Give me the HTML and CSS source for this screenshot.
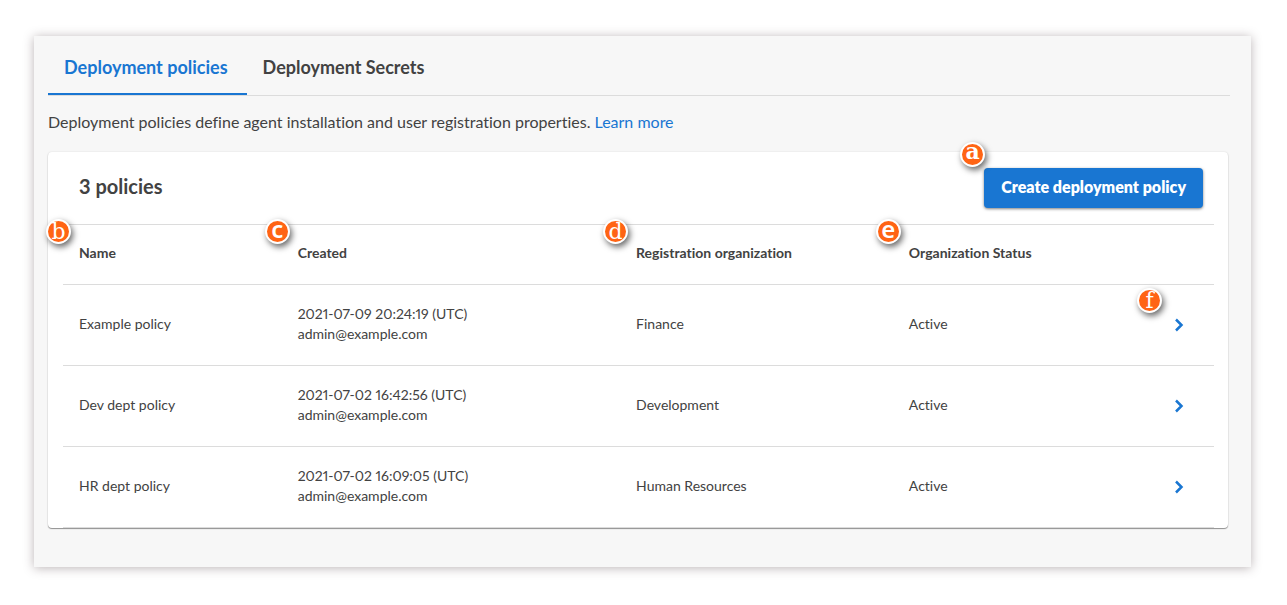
FILE: index.html
```html
<!DOCTYPE html>
<html lang="en">

<head>
    <meta charset="UTF-8">
    <meta name="viewport" content="width=device-width, initial-scale=1.0">
    <title>Deployment policies</title>
    <link rel="stylesheet" href="styles.css">
</head>

<body>
    <main class="panel">
        <nav class="tabs">
            <a href="#" class="tab active">Deployment policies</a>
            <a href="#" class="tab">Deployment Secrets</a>
        </nav>

        <p class="intro">Deployment policies define agent installation and user registration properties. <a href="#">Learn more</a></p>

        <section class="card">
            <div class="card-header">
                <h2>3 policies</h2>
                <div class="create">
                    <button type="button" class="create-btn">Create deployment policy</button>
                    <span class="badge badge-create">a</span>
                </div>
            </div>

            <div class="table-wrap">
                <table>
                    <colgroup>
                        <col class="col-name">
                        <col class="col-created">
                        <col class="col-org">
                        <col class="col-status">
                        <col>
                    </colgroup>
                    <thead>
                        <tr>
                            <th>Name<span class="badge">b</span></th>
                            <th>Created<span class="badge badge-sans">c</span></th>
                            <th>Registration organization<span class="badge">d</span></th>
                            <th>Organization Status<span class="badge badge-sans">e</span></th>
                            <th></th>
                        </tr>
                    </thead>
                    <tbody>
                        <tr>
                            <td>Example policy</td>
                            <td>2021-07-09 20:24:19 (UTC)<br>admin@example.com</td>
                            <td>Finance</td>
                            <td>Active</td>
                            <td class="open">
                                <a href="#" class="open-link" aria-label="Open Example policy">
                                    <svg viewBox="0 0 24 24"><path d="M9 7.5l5.5 5.5L9 18.5" /></svg>
                                    <span class="badge badge-open">f</span>
                                </a>
                            </td>
                        </tr>
                        <tr>
                            <td>Dev dept policy</td>
                            <td>2021-07-02 16:42:56 (UTC)<br>admin@example.com</td>
                            <td>Development</td>
                            <td>Active</td>
                            <td class="open">
                                <a href="#" class="open-link" aria-label="Open Dev dept policy">
                                    <svg viewBox="0 0 24 24"><path d="M9 7.5l5.5 5.5L9 18.5" /></svg>
                                </a>
                            </td>
                        </tr>
                        <tr>
                            <td>HR dept policy</td>
                            <td>2021-07-02 16:09:05 (UTC)<br>admin@example.com</td>
                            <td>Human Resources</td>
                            <td>Active</td>
                            <td class="open">
                                <a href="#" class="open-link" aria-label="Open HR dept policy">
                                    <svg viewBox="0 0 24 24"><path d="M9 7.5l5.5 5.5L9 18.5" /></svg>
                                </a>
                            </td>
                        </tr>
                    </tbody>
                </table>
            </div>
        </section>
    </main>
</body>

</html>
```
FILE: styles.css
```css
* {
    margin: 0;
    padding: 0;
    box-sizing: border-box;
}

body {
    background: #fff;
    color: #424242;
    font-family: Lato, "Liberation Sans", sans-serif;
    font-size: 14px;
    font-variant-ligatures: none;
    font-variant-numeric: proportional-nums;
    line-height: 20px;
    padding: 36px 36px 38px 34px;
}

a {
    color: #1976d2;
    text-decoration: none;
}

.panel {
    background: #f7f7f7;
    padding: 0 21px 39px 14px;
    box-shadow: 0 1px 10px rgba(60, 40, 45, 0.35);
}

.tabs {
    display: flex;
    border-bottom: 1px solid #dcdcdc;
}

.tab {
    padding: 21px 19px 16px 16px;
    border-bottom: 2px solid transparent;
    color: #424242;
    font-size: 18px;
    font-weight: 700;
}

.tab.active {
    color: #1976d2;
    border-bottom-color: #1976d2;
}

.intro {
    padding: 16px 0 20px;
    font-size: 16px;
}

.card {
    margin-right: 2px;
    background: #fff;
    border-radius: 4px;
    box-shadow: 0 1px 1px rgba(0, 0, 0, 0.4), 0 0 2px rgba(0, 0, 0, 0.12);
}

.card-header {
    display: flex;
    justify-content: space-between;
    align-items: flex-start;
    height: 72px;
    padding: 16px 25px 0 31px;
}

h2 {
    font-size: 20px;
    font-weight: 700;
    line-height: 36px;
}

.create {
    position: relative;
}

.create-btn {
    display: block;
    height: 40px;
    padding: 0 17px 2px;
    border: none;
    border-radius: 4px;
    background: #1976d2;
    color: #fff;
    font: inherit;
    font-size: 16px;
    font-weight: 800;
    box-shadow: 0 1px 3px rgba(0, 0, 0, 0.5);
    cursor: pointer;
}

.table-wrap {
    padding: 0 14px 0 15px;
}

table {
    width: 100%;
    table-layout: fixed;
    border-spacing: 0;
    border-top: 1px solid #dcdcdc;
}

.col-name {
    width: 19%;
}

.col-created {
    width: 29.4%;
}

.col-org {
    width: 23.7%;
}

.col-status {
    width: 20%;
}

th,
td {
    position: relative;
    padding: 0 16px 2px;
    border-bottom: 1px solid #dcdcdc;
    text-align: left;
    vertical-align: middle;
}

th {
    height: 60px;
    padding-bottom: 4px;
    font-weight: 700;
}

td {
    height: 81px;
}

td.open {
    padding-right: 23px;
}

.open-link {
    display: block;
    position: relative;
    width: 24px;
    height: 24px;
    margin-left: auto;
}

.open-link svg {
    display: block;
    fill: none;
    stroke: #1976d2;
    stroke-width: 2.5;
}

/* lettered callouts */
.badge {
    position: absolute;
    top: -6px;
    left: -17px;
    width: 25px;
    height: 25px;
    border: 2px solid #fff;
    border-radius: 50%;
    background: #ff6414;
    color: #fff;
    font-family: "DejaVu Serif", serif;
    font-size: 22px;
    font-weight: 400;
    line-height: 22px;
    text-align: center;
    box-shadow: 2px 3px 6px rgba(0, 0, 0, 0.6);
}

.badge-sans {
    font-family: "Noto Sans", sans-serif;
    font-size: 24px;
    font-weight: 600;
    line-height: 15px;
}

.badge-create {
    top: -26px;
    left: -24px;
    font-weight: 700;
    line-height: 15px;
}

.badge-open {
    top: -24px;
    left: -30px;
}
```
